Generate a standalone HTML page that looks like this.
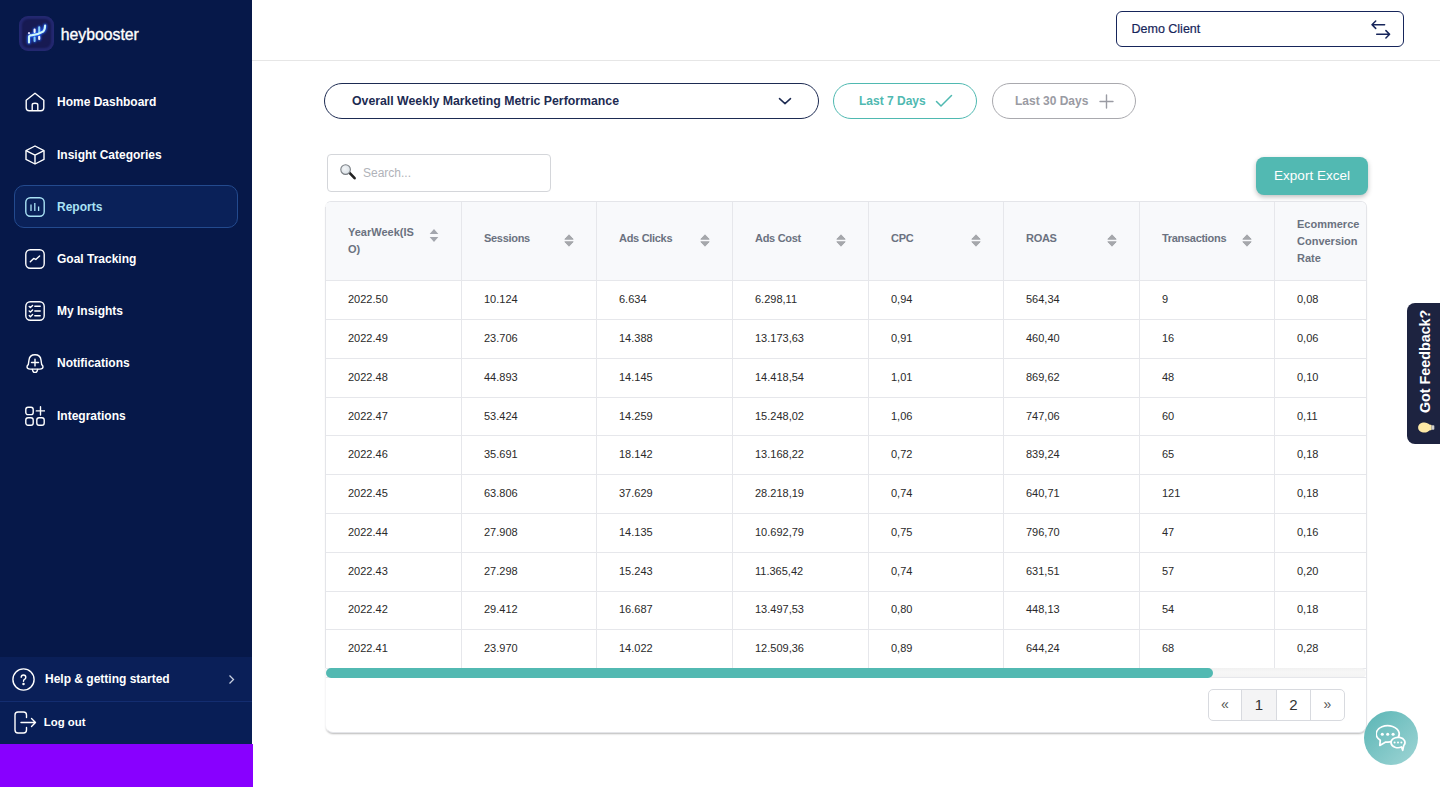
<!DOCTYPE html>
<html><head><meta charset="utf-8">
<style>
*{box-sizing:border-box;margin:0;padding:0}
html,body{width:1440px;height:787px;overflow:hidden;background:#fff;font-family:"Liberation Sans",sans-serif}
.abs{position:absolute}
#side{position:absolute;left:0;top:0;width:252px;height:787px;background:#061849}
#logo{left:19px;top:16px;width:35px;height:35px;border-radius:9px;background:#171a52;box-shadow:inset 0 0 2px 3px #232870}
#brand{left:60.7px;top:25px;font-size:15.8px;color:#fff;line-height:20px;-webkit-text-stroke:0.35px #fff}
.nav{position:absolute;left:14px;width:224px;height:42px}
.nav svg{position:absolute;left:11px;top:11px}
.nav span{position:absolute;left:43px;top:0;line-height:42px;font-size:12px;font-weight:bold;color:#fff}
.nav.act{background:#0a2159;border:1px solid #234a8e;border-radius:10px}
.nav.act svg{left:10px;top:11px}
.nav.act span{left:42px;top:1px;line-height:41px;color:#a9e2f5}
#help{left:0;top:657px;width:252px;height:44px;background:#0a1f58}
#logout{left:0;top:701px;width:252px;height:43px;background:#081e56;border-top:1px solid #132d70}
#purple{left:0;top:744px;width:253px;height:43px;background:#8800ff}
#topbar{left:252px;top:0;width:1188px;height:61px;border-bottom:1px solid #e6e6e6;background:#fff}
#client{left:1116px;top:11px;width:288px;height:36px;border:1.3px solid #16255a;border-radius:6px}
#client span{position:absolute;left:14.5px;top:1px;line-height:33px;font-size:12.5px;color:#16255a;-webkit-text-stroke:0.2px #16255a}
.pill{position:absolute;top:83px;height:36px;border-radius:18px;border:1px solid}
#dd{left:324px;width:495px;border-color:#1d2b52}
#dd span{position:absolute;left:27px;top:0;line-height:34px;font-size:12.3px;font-weight:bold;color:#1d2b52}
#p7{left:833px;width:144px;border-color:#4fb9b1}
#p7 span{position:absolute;left:25px;line-height:34px;font-size:12px;font-weight:bold;color:#4fb9b1}
#p30{left:992px;width:144px;border-color:#a9a9ae}
#p30 span{position:absolute;left:22px;line-height:34px;font-size:12px;font-weight:bold;color:#9a9ba3}
#search{left:327px;top:154px;width:224px;height:38px;border:1px solid #d4d6da;border-radius:4px}
#search span{position:absolute;left:35px;top:1px;line-height:35px;font-size:12px;color:#b0b3b9}
#export{left:1256px;top:157px;width:112px;height:38px;border-radius:8px;background:#52b9b2;box-shadow:0 2px 5px rgba(0,0,0,.25)}
#export span{position:absolute;left:0;width:112px;text-align:center;line-height:38px;font-size:13.5px;color:#fff}
#card{left:325px;top:201px;width:1042px;height:532px;border:1px solid #e4e5e9;border-left-color:#f6f6f7;border-radius:6px 6px 8px 8px;box-shadow:0 2px 2px -1px rgba(0,0,0,.28);overflow:hidden;background:#fff}
table{border-collapse:collapse;table-layout:fixed;position:absolute;left:-1px;top:-1px;width:1085px}
td,th{border:1px solid #e6e7eb;width:135.75px;text-align:left;vertical-align:middle;padding:0 0 0 22px;font-size:11px;color:#2a2a2a;font-weight:normal}
th{height:79.4px;background:#f8f9fb;color:#6b7280;font-weight:bold;font-size:11px;line-height:17px;position:relative}
th b{position:relative;top:-3px;font-weight:bold;letter-spacing:-0.3px}
td span{position:relative;top:-1px}
td{height:38.78px}
.sort{position:absolute;right:22px;top:32.3px;width:10px;height:13px}
#scroll{left:326px;top:668px;width:1040px;height:9.5px;background:linear-gradient(#f1f1f1,#f7f7f7 40%,#f3f3f3);border-radius:5px}
#sline{left:326px;top:677px;width:1040px;height:1px;background:#e6e7eb}
#thumb{left:326px;top:668px;width:887px;height:9.5px;background:#52b9b2;border-radius:5px}
#pag{left:1208px;top:689px;width:137px;height:32px;border:1px solid #d8dadf;border-radius:5px;overflow:hidden;display:flex}
#pag div{flex:none;height:30px;line-height:29px;text-align:center;font-size:15px;color:#333;border-left:1px solid #d8dadf}
#chat{left:1364px;top:711px;width:54px;height:54px;border-radius:50%;background:linear-gradient(135deg,#5ab5b5,#9fd5d5)}
#fb{left:1407px;top:303px;width:40px;height:141px;border-radius:8px 0 0 8px;background:#1d2340}
</style></head><body>
<div id="side">
  <div id="logo" class="abs"><svg class="abs" style="left:0;top:0" width="35" height="35" viewBox="0 0 35 35" fill="none" stroke-linecap="round"><defs><filter id="gl" x="-50%" y="-50%" width="200%" height="200%"><feGaussianBlur stdDeviation="1.3"/></filter></defs><g filter="url(#gl)"><path d="M10 26.5 V20.8 Q10 19.4 13.3 19.1 Q20 18.2 24 15.6 Q26 14 26.1 9.6" stroke="#2060ff" stroke-width="3.6"/><path d="M15.6 13.4 V25.1 M20.2 11.2 V23.2" stroke="#2060ff" stroke-width="3"/></g><path d="M15.6 21.5 V25.1 M20.2 11.2 V16.5" stroke="#86cdf0" stroke-width="2"/><path d="M15.6 13.6 V16 M20.2 20.8 V23" stroke="#fbf7f0" stroke-width="2.1"/><circle cx="10" cy="17.2" r="1.1" fill="#d8d8ff"/><path d="M10 26.5 V20.8 Q10 19.4 13.3 19.1 Q20 18.2 24 15.6 Q26 14 26.1 9.6" stroke="#cdf6f8" stroke-width="2.1"/></svg></div>
  <div id="brand" class="abs">heybooster</div>

  <div class="nav" style="top:81px"><svg width="20" height="20" viewBox="0 0 20 20" fill="none" stroke="#fff" stroke-width="1.4" stroke-linejoin="round"><path d="M1.2 8.2 L10 1.2 L18.8 8.2 V15.8 Q18.8 18.8 15.8 18.8 H4.2 Q1.2 18.8 1.2 15.8 Z"/><path d="M7.2 18.8 V12.8 Q7.2 11.2 10 11.2 Q12.8 11.2 12.8 12.8 V18.8"/></svg><span>Home Dashboard</span></div>
  <div class="nav" style="top:133.5px"><svg width="20" height="20" viewBox="0 0 20 20" fill="none" stroke="#fff" stroke-width="1.4" stroke-linejoin="round"><path d="M10 1 L19 5.6 V14.4 L10 19 L1 14.4 V5.6 Z"/><path d="M1 5.6 L10 10.2 L19 5.6 M10 10.2 V19"/></svg><span>Insight Categories</span></div>
  <div class="nav act" style="top:185px;height:43px"><svg width="20" height="20" viewBox="0 0 20 20" fill="none" stroke="#a9e2f5" stroke-width="1.4"><rect x="0.8" y="0.8" width="18.4" height="18.4" rx="4.5"/><path d="M6 7.4 V14 M9.8 5.9 V14 M13.6 9.4 V14" stroke-width="1.3"/></svg><span>Reports</span></div>
  <div class="nav" style="top:238px"><svg width="20" height="20" viewBox="0 0 20 20" fill="none" stroke="#fff" stroke-width="1.4" stroke-linejoin="round" stroke-linecap="round"><rect x="0.8" y="0.8" width="18.4" height="18.4" rx="4.5"/><path d="M5.3 12.8 L8.7 9.4 L10.8 10.5 L14.6 7"/></svg><span>Goal Tracking</span></div>
  <div class="nav" style="top:290px"><svg width="20" height="20" viewBox="0 0 20 20" fill="none" stroke="#fff" stroke-width="1.4" stroke-linejoin="round" stroke-linecap="round"><rect x="0.8" y="0.8" width="18.4" height="18.4" rx="4.5"/><path d="M4.2 5.5 L5.4 6.6 L7.6 4.4 M4.2 10 L5.4 11.1 L7.6 8.9 M4.2 14.6 L5.4 15.7 L7.6 13.5"/><path d="M9.8 5.3 H15.2 M9.8 10 H15.2 M9.8 14.7 H15.2"/></svg><span>My Insights</span></div>
  <div class="nav" style="top:342px"><svg width="20" height="20" viewBox="0 0 20 20" fill="none" stroke="#fff" stroke-width="1.4" stroke-linejoin="round" stroke-linecap="round"><path d="M10 1.7 C6 1.7 4.3 4 4 7 L3.3 11.6 Q2 12.6 2 14 Q2.2 16.1 5 16.1 H15 Q17.8 16.1 18 14 Q18 12.6 16.7 11.6 L16 7 C15.7 4 14 1.7 10 1.7 Z"/><path d="M7.3 16.4 Q8 19.7 10 19.7 Q12 19.7 12.7 16.4"/><path d="M10 6.1 V12.9 M6.5 9.5 H13.5"/></svg><span>Notifications</span></div>
  <div class="nav" style="top:394.5px"><svg width="20" height="20" viewBox="0 0 20 20" fill="none" stroke="#fff" stroke-width="1.4" stroke-linejoin="round" stroke-linecap="round"><rect x="0.8" y="1.2" width="7.4" height="7.4" rx="2.2"/><rect x="0.8" y="11.8" width="7.4" height="7.4" rx="2.2"/><rect x="11.8" y="11.8" width="7.4" height="7.4" rx="2.2"/><path d="M15.5 0.7 V9.1 M11.3 4.9 H19.7"/></svg><span>Integrations</span></div>
</div>
<div id="help" class="abs"><svg class="abs" style="left:12px;top:10.5px" width="23" height="23" viewBox="0 0 23 23" fill="none" stroke="#fff" stroke-width="1.4"><circle cx="11.5" cy="11.5" r="10.6"/><path d="M9.2 9.2 Q9.2 7 11.5 7 Q13.8 7 13.8 9.2 Q13.8 10.7 12.4 11.4 Q11.5 11.9 11.5 13.3" stroke-linecap="round"/><circle cx="11.5" cy="16" r="0.55" fill="#fff"/></svg><span class="abs" style="left:45px;top:0;line-height:44px;font-size:12px;font-weight:bold;color:#fff">Help &amp; getting started</span><svg class="abs" style="left:228px;top:17px" width="7" height="11" viewBox="0 0 7 11" fill="none" stroke="#c9cfe0" stroke-width="1.3"><path d="M1.5 1.5 L5.5 5.5 L1.5 9.5"/></svg></div>
<div id="logout" class="abs"><svg class="abs" style="left:14px;top:9px" width="23" height="23" viewBox="0 0 23 23" fill="none" stroke="#fff" stroke-width="1.4" stroke-linecap="round" stroke-linejoin="round"><path d="M12.5 6.5 V4 Q12.5 1 9.5 1 H4 Q1 1 1 4 V19 Q1 22 4 22 H9.5 Q12.5 22 12.5 19 V16.5"/><path d="M7 11.5 H21.5 M17.5 7.5 L21.5 11.5 L17.5 15.5"/></svg><span class="abs" style="left:43.8px;top:0;line-height:41px;font-size:11.4px;font-weight:bold;color:#fff">Log out</span></div>
<div id="purple" class="abs"></div>
<div id="topbar" class="abs"></div>
<div id="client" class="abs"><span>Demo Client</span><svg class="abs" style="left:254px;top:6.5px" width="22" height="22" viewBox="0 0 22 22" fill="none" stroke="#16255a" stroke-width="1.5" stroke-linecap="round" stroke-linejoin="round"><path d="M1 5.7 H13.6 M4.7 2 L1 5.7 L4.7 9.4"/><path d="M5.7 15.3 H18.6 M14.9 11.6 L18.6 15.3 L14.9 19"/></svg></div>
<div id="dd" class="pill"><span>Overall Weekly Marketing Metric Performance</span><svg class="abs" style="left:452.5px;top:13.2px" width="14" height="9" viewBox="0 0 14 9" fill="none" stroke="#1d2b52" stroke-width="1.5" stroke-linecap="round" stroke-linejoin="round"><path d="M1.5 1.6 L7 6.6 L12.5 1.6"/></svg></div>
<div id="p7" class="pill"><span>Last 7 Days</span><svg class="abs" style="left:101px;top:10px" width="18" height="14" viewBox="0 0 18 14" fill="none" stroke="#4fb9b1" stroke-width="1.5" stroke-linecap="round" stroke-linejoin="round"><path d="M1.5 7.5 L6 12 L16.5 1.5"/></svg></div>
<div id="p30" class="pill"><span>Last 30 Days</span><svg class="abs" style="left:106px;top:10px" width="15" height="15" viewBox="0 0 15 15" fill="none" stroke="#9a9ba3" stroke-width="1.4" stroke-linecap="round"><path d="M7.5 1 V14 M1 7.5 H14"/></svg></div>
<div id="search" class="abs"><svg class="abs" style="left:11px;top:9px" width="18" height="18" viewBox="0 0 18 18"><defs><radialGradient id="lg" cx="0.4" cy="0.4" r="0.7"><stop offset="0" stop-color="#f4f6f8"/><stop offset="1" stop-color="#d5dde3"/></radialGradient></defs><path d="M10.6 8.9 L15.6 14.2" stroke="#222" stroke-width="2.6" stroke-linecap="round"/><circle cx="6.6" cy="5.6" r="4.8" fill="url(#lg)" stroke="#7a7f84" stroke-width="1.1"/></svg><span>Search...</span></div>
<div id="export" class="abs"><span>Export Excel</span></div>
<div id="card" class="abs"><table><colgroup><col style="width:136px"><col style="width:135px"><col style="width:136px"><col style="width:136px"><col style="width:135px"><col style="width:136px"><col style="width:135px"><col style="width:136px"></colgroup><tr><th><div style="width:70px">YearWeek(IS<br>O)</div><svg class="sort" style="top:27px" width="8" height="12" viewBox="0 0 8 12"><path d="M4 0 L8 4.6 H0 Z M4 12 L8 7.4 H0 Z" fill="#a3a6ad"/></svg></th><th><b>Sessions</b><svg class="sort" width="10" height="13" viewBox="0 0 10 13"><path d="M5 0.8 L9.2 5.2 H0.8 Z M5 12.2 L9.2 7.8 H0.8 Z" fill="#a5a7ab" stroke="#a5a7ab" stroke-width="1" stroke-linejoin="round"/></svg></th><th><b>Ads Clicks</b><svg class="sort" width="10" height="13" viewBox="0 0 10 13"><path d="M5 0.8 L9.2 5.2 H0.8 Z M5 12.2 L9.2 7.8 H0.8 Z" fill="#a5a7ab" stroke="#a5a7ab" stroke-width="1" stroke-linejoin="round"/></svg></th><th><b>Ads Cost</b><svg class="sort" width="10" height="13" viewBox="0 0 10 13"><path d="M5 0.8 L9.2 5.2 H0.8 Z M5 12.2 L9.2 7.8 H0.8 Z" fill="#a5a7ab" stroke="#a5a7ab" stroke-width="1" stroke-linejoin="round"/></svg></th><th><b>CPC</b><svg class="sort" width="10" height="13" viewBox="0 0 10 13"><path d="M5 0.8 L9.2 5.2 H0.8 Z M5 12.2 L9.2 7.8 H0.8 Z" fill="#a5a7ab" stroke="#a5a7ab" stroke-width="1" stroke-linejoin="round"/></svg></th><th><b>ROAS</b><svg class="sort" width="10" height="13" viewBox="0 0 10 13"><path d="M5 0.8 L9.2 5.2 H0.8 Z M5 12.2 L9.2 7.8 H0.8 Z" fill="#a5a7ab" stroke="#a5a7ab" stroke-width="1" stroke-linejoin="round"/></svg></th><th><b>Transactions</b><svg class="sort" width="10" height="13" viewBox="0 0 10 13"><path d="M5 0.8 L9.2 5.2 H0.8 Z M5 12.2 L9.2 7.8 H0.8 Z" fill="#a5a7ab" stroke="#a5a7ab" stroke-width="1" stroke-linejoin="round"/></svg></th><th><div style="width:70px">Ecommerce<br>Conversion<br>Rate</div></th></tr><tr><td><span>2022.50</span></td><td><span>10.124</span></td><td><span>6.634</span></td><td><span>6.298,11</span></td><td><span>0,94</span></td><td><span>564,34</span></td><td><span>9</span></td><td><span>0,08</span></td></tr><tr><td><span>2022.49</span></td><td><span>23.706</span></td><td><span>14.388</span></td><td><span>13.173,63</span></td><td><span>0,91</span></td><td><span>460,40</span></td><td><span>16</span></td><td><span>0,06</span></td></tr><tr><td><span>2022.48</span></td><td><span>44.893</span></td><td><span>14.145</span></td><td><span>14.418,54</span></td><td><span>1,01</span></td><td><span>869,62</span></td><td><span>48</span></td><td><span>0,10</span></td></tr><tr><td><span>2022.47</span></td><td><span>53.424</span></td><td><span>14.259</span></td><td><span>15.248,02</span></td><td><span>1,06</span></td><td><span>747,06</span></td><td><span>60</span></td><td><span>0,11</span></td></tr><tr><td><span>2022.46</span></td><td><span>35.691</span></td><td><span>18.142</span></td><td><span>13.168,22</span></td><td><span>0,72</span></td><td><span>839,24</span></td><td><span>65</span></td><td><span>0,18</span></td></tr><tr><td><span>2022.45</span></td><td><span>63.806</span></td><td><span>37.629</span></td><td><span>28.218,19</span></td><td><span>0,74</span></td><td><span>640,71</span></td><td><span>121</span></td><td><span>0,18</span></td></tr><tr><td><span>2022.44</span></td><td><span>27.908</span></td><td><span>14.135</span></td><td><span>10.692,79</span></td><td><span>0,75</span></td><td><span>796,70</span></td><td><span>47</span></td><td><span>0,16</span></td></tr><tr><td><span>2022.43</span></td><td><span>27.298</span></td><td><span>15.243</span></td><td><span>11.365,42</span></td><td><span>0,74</span></td><td><span>631,51</span></td><td><span>57</span></td><td><span>0,20</span></td></tr><tr><td><span>2022.42</span></td><td><span>29.412</span></td><td><span>16.687</span></td><td><span>13.497,53</span></td><td><span>0,80</span></td><td><span>448,13</span></td><td><span>54</span></td><td><span>0,18</span></td></tr><tr><td><span>2022.41</span></td><td><span>23.970</span></td><td><span>14.022</span></td><td><span>12.509,36</span></td><td><span>0,89</span></td><td><span>644,24</span></td><td><span>68</span></td><td><span>0,28</span></td></tr></table></div>
<div class="abs" style="left:325px;top:207px;width:1px;height:461px;background:#e4e5e9"></div><div id="scroll" class="abs"></div><div id="sline" class="abs"></div>
<div id="thumb" class="abs"></div>
<div id="pag" class="abs"><div style="width:32px;border-left:0;font-size:14px;color:#555">&laquo;</div><div style="width:35px;background:#f4f4f5;color:#333">1</div><div style="width:34px">2</div><div style="width:34px;font-size:14px;color:#555">&raquo;</div></div>
<div id="chat" class="abs"><svg class="abs" style="left:12px;top:13px" width="32" height="30" viewBox="0 0 32 30" fill="none" stroke="#fff" stroke-width="1.7" stroke-linejoin="round" stroke-linecap="round"><path d="M9.7 18 A11.5 8.2 0 1 0 4.3 16.2 L3.8 21.4 Z"/><circle cx="6.3" cy="10.3" r="1.55" fill="#fff" stroke="none"/><circle cx="11.7" cy="10.3" r="1.55" fill="#fff" stroke="none"/><circle cx="17.1" cy="10.3" r="1.55" fill="#fff" stroke="none"/><path d="M25.5 23 A7 5.2 0 1 1 27.73 21.48 L26.7 26.3 Z" fill="#80c8c8"/><circle cx="18.6" cy="18.4" r="1" fill="#fff" stroke="none"/><circle cx="22" cy="18.4" r="1" fill="#fff" stroke="none"/><circle cx="25.4" cy="18.4" r="1" fill="#fff" stroke="none"/></svg></div>
<div id="fb" class="abs"><div class="abs" style="left:-0.5px;top:141px;width:141px;height:36px;transform-origin:0 0;transform:rotate(-90deg);"><svg class="abs" style="left:10px;top:10px" width="13" height="18" viewBox="0 0 14 16" preserveAspectRatio="none"><path d="M7 1 C3.5 1 1.5 3.6 1.5 6.5 C1.5 8.6 2.7 10 3.8 11 L4.2 13 H9.8 L10.2 11 C11.3 10 12.5 8.6 12.5 6.5 C12.5 3.6 10.5 1 7 1 Z" fill="#fde9a6"/><rect x="4.5" y="13" width="5" height="2.4" rx="0.8" fill="#cfcfcf"/></svg><span class="abs" style="left:31px;top:0;line-height:36px;font-size:14.3px;font-weight:bold;color:#fff;white-space:nowrap">Got Feedback?</span></div></div>
</body></html>
